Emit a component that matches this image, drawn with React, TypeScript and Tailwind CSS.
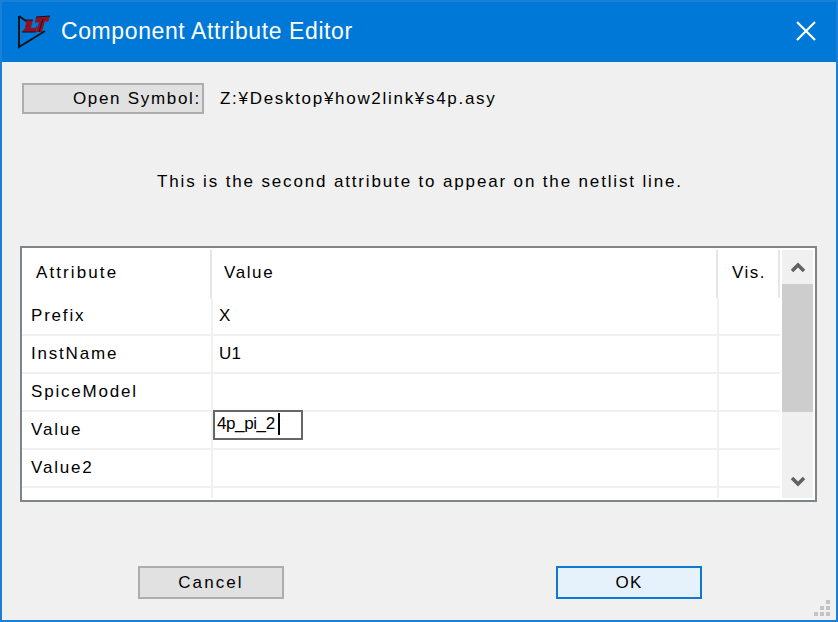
const rows = [
  { name: "Prefix", value: "X" },
  { name: "InstName", value: "U1" },
  { name: "SpiceModel", value: "" },
  { name: "Value", value: "", editing: true },
  { name: "Value2", value: "" },
];

function Logo() {
  return (
    <svg width="34" height="35" viewBox="0 0 34 35" className="shrink-0">
      {/* L */}
      <path d="M7 6 L16 6 L15 9 L14 14 L18 14 L20 11 L19 18 L5 18 L8 14 L9 9 Z" fill="#8f1022" />
      {/* T */}
      <path d="M19 3 L33 2 L31 8 L28 7 L25 17 L28 18 L19 18 L22 8 L18 9 Z" fill="#8f1022" />
      <path d="M2 2 L2 33 L28 17 M2 2 L9 7" fill="none" stroke="#14141c" strokeWidth="2" />
      <path d="M7 6 L16 6 M5 18 L19 18 M19 3 L33 2 M26 5 L22 18" fill="none" stroke="#14141c" strokeWidth="1" />
    </svg>
  );
}

function GripDots() {
  const on = [2, 4, 5, 6, 7, 8];
  return (
    <div className="grid grid-cols-3 gap-[2px] w-[16px]">
      {Array.from({ length: 9 }).map((_, i) => (
        <div key={i} className={on.includes(i) ? "h-[4px] w-[4px] bg-[#c4c4c4]" : "h-[4px] w-[4px]"} />
      ))}
    </div>
  );
}

export default function App() {
  return (
    <div
      className="w-[838px] h-[622px] flex flex-col overflow-hidden bg-[#f0f0f0] border-x-[2px] border-b-[2px] border-t-[2px] border-[#1a7fd6] text-black"
      style={{ fontFamily: '"Liberation Sans", sans-serif' }}
    >
      {/* Title bar */}
      <div className="h-[60px] shrink-0 bg-[#0078d7] flex items-center pl-[15px] pr-[20px] pb-[2px] text-white">
        <Logo />
        <span className="ml-[10px] text-[23px] tracking-[0.6px] flex-1">Component Attribute Editor</span>
        <svg width="20" height="20" viewBox="0 0 20 20">
          <path d="M1 1 L19 19 M19 1 L1 19" fill="none" stroke="white" strokeWidth="2.2" />
        </svg>
      </div>

      <div className="flex-1 flex flex-col relative">
        {/* Open symbol row */}
        <div className="flex items-center mt-[21px] ml-[20px] h-[31px]">
          <div className="w-[182px] h-[31px] bg-[#e1e1e1] border-[2px] border-[#adadad] flex items-center justify-end pr-[1px] text-[17px] tracking-[1.7px]">
            Open Symbol:
          </div>
          <span className="ml-[16px] text-[17px] tracking-[1.7px]">Z:¥Desktop¥how2link¥s4p.asy</span>
        </div>

        {/* Description */}
        <p className="mt-[56px] ml-[155px] text-[17px] tracking-[1.85px] leading-[24px]">
          This is the second attribute to appear on the netlist line.
        </p>

        {/* Attribute table */}
        <div className="mt-[52px] ml-[18px] w-[797px] h-[256px] border-[2px] border-[#7e858a] bg-white flex">
          <div className="w-[758px] flex flex-col">
            <div className="h-[50px] flex text-[17px] shrink-0 pt-[2px]">
              <div className="w-[190px] h-[48px] border-r-[2px] border-[#e6e6e6] flex items-center pl-[14px] pb-[3px] tracking-[2.1px]">Attribute</div>
              <div className="w-[506px] h-[48px] border-r-[2px] border-[#e6e6e6] flex items-center pl-[12px] pb-[3px] tracking-[1.6px]">Value</div>
              <div className="w-[62px] h-[48px] border-r-[2px] border-[#e6e6e6] flex items-center pl-[14px] pb-[3px] tracking-[1.5px]">Vis.</div>
            </div>
            {rows.map((row) => (
              <div key={row.name} className="h-[38px] flex text-[17px] border-b-[2px] border-[#f0f0f0] shrink-0">
                <div className="w-[191px] border-r-[2px] border-[#f0f0f0] flex items-center pl-[9px] tracking-[1.8px]">{row.name}</div>
                <div className="w-[506px] border-r-[2px] border-[#f0f0f0]">
                  {row.editing ? (
                    <div className="w-[90px] h-[30px] mt-[-2px] bg-white border-[2px] border-[#666666] flex items-center pl-[2px] pb-[2px] text-[17px] tracking-[-0.4px]">
                      4p_pi_2
                      <span className="ml-[3px] w-[2px] h-[22px] bg-black" />
                    </div>
                  ) : (
                    <div className="h-full flex items-center pl-[6px] tracking-[0.3px]">{row.value}</div>
                  )}
                </div>
              </div>
            ))}
            <div className="flex-1 flex">
              <div className="w-[191px] border-r-[2px] border-[#f0f0f0] mb-[2px]" />
              <div className="w-[506px] border-r-[2px] border-[#f0f0f0] mb-[2px]" />
            </div>
          </div>
          <div className="w-[31px] ml-[2px] my-[2px] bg-[#f0f0f0] flex flex-col">
            <div className="h-[34px] flex items-center justify-center">
              <svg width="16" height="12" viewBox="0 0 16 12">
                <path d="M2 10 L8 4 L14 10" fill="none" stroke="#606060" strokeWidth="3.5" />
              </svg>
            </div>
            <div className="h-[128px] bg-[#cdcdcd]" />
            <div className="flex-1 flex items-end justify-center pb-[10px]">
              <svg width="16" height="12" viewBox="0 0 16 12">
                <path d="M2 2 L8 8 L14 2" fill="none" stroke="#606060" strokeWidth="3.5" />
              </svg>
            </div>
          </div>
        </div>

        {/* Buttons */}
        <div className="flex mt-[64px] ml-[136px]">
          <div className="w-[146px] h-[33px] bg-[#e1e1e1] border-[2px] border-[#adadad] flex items-center justify-center text-[17px] tracking-[2.1px]">
            Cancel
          </div>
          <div className="ml-[272px] w-[146px] h-[33px] bg-[#e5f1fb] border-[2px] border-[#0f78cf] flex items-center justify-center text-[17px] tracking-[1.2px]">
            OK
          </div>
        </div>

        <div className="absolute right-[6px] bottom-[4px]">
          <GripDots />
        </div>
      </div>
    </div>
  );
}
